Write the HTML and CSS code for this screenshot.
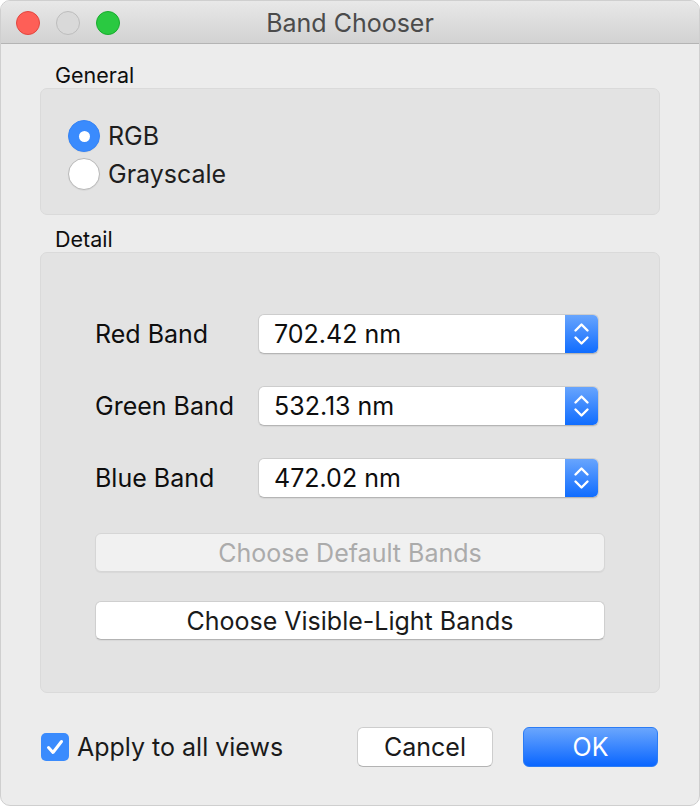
FILE: index.html
```html
<!DOCTYPE html>
<html>
<head>
<meta charset="utf-8">
<title>Band Chooser</title>
<link rel="stylesheet" href="styles.css">
</head>
<body>
<div class="window">
  <div class="titlebar">
    <div class="lights">
      <span class="light red"></span>
      <span class="light gray"></span>
      <span class="light green"></span>
    </div>
    <div class="title">Band Chooser</div>
  </div>
  <div class="content">
    <div class="section-label general-label">General</div>
    <div class="group general-group">
      <label class="radio-row">
        <span class="radio on"></span>
        <span class="radio-text">RGB</span>
      </label>
      <label class="radio-row">
        <span class="radio"></span>
        <span class="radio-text">Grayscale</span>
      </label>
    </div>
    <div class="section-label detail-label">Detail</div>
    <div class="group detail-group">
      <div class="band-row">
        <span class="band-label">Red Band</span>
        <div class="popup">
          <span class="popup-value">702.42 nm</span>
          <span class="stepper">
            <svg width="33" height="38" viewBox="0 0 33 38"><path d="M10.5 15.5 L16.5 9.5 L22.5 15.5" fill="none" stroke="#fff" stroke-width="2.4" stroke-linecap="round" stroke-linejoin="round"/><path d="M10.5 22.5 L16.5 28.5 L22.5 22.5" fill="none" stroke="#fff" stroke-width="2.4" stroke-linecap="round" stroke-linejoin="round"/></svg>
          </span>
        </div>
      </div>
      <div class="band-row">
        <span class="band-label">Green Band</span>
        <div class="popup">
          <span class="popup-value">532.13 nm</span>
          <span class="stepper">
            <svg width="33" height="38" viewBox="0 0 33 38"><path d="M10.5 15.5 L16.5 9.5 L22.5 15.5" fill="none" stroke="#fff" stroke-width="2.4" stroke-linecap="round" stroke-linejoin="round"/><path d="M10.5 22.5 L16.5 28.5 L22.5 22.5" fill="none" stroke="#fff" stroke-width="2.4" stroke-linecap="round" stroke-linejoin="round"/></svg>
          </span>
        </div>
      </div>
      <div class="band-row">
        <span class="band-label">Blue Band</span>
        <div class="popup">
          <span class="popup-value">472.02 nm</span>
          <span class="stepper">
            <svg width="33" height="38" viewBox="0 0 33 38"><path d="M10.5 15.5 L16.5 9.5 L22.5 15.5" fill="none" stroke="#fff" stroke-width="2.4" stroke-linecap="round" stroke-linejoin="round"/><path d="M10.5 22.5 L16.5 28.5 L22.5 22.5" fill="none" stroke="#fff" stroke-width="2.4" stroke-linecap="round" stroke-linejoin="round"/></svg>
          </span>
        </div>
      </div>
      <div class="wide-button disabled">Choose Default Bands</div>
      <div class="wide-button">Choose Visible-Light Bands</div>
    </div>
    <div class="bottom-bar">
      <label class="check-row">
        <span class="checkbox">
          <svg width="28" height="28" viewBox="0 0 28 28"><path d="M7.5 14.5 L12 19.5 L20.5 8.5" fill="none" stroke="#fff" stroke-width="3" stroke-linecap="round" stroke-linejoin="round"/></svg>
        </span>
        <span class="check-text">Apply to all views</span>
      </label>
      <div class="actions">
        <div class="push cancel">Cancel</div>
        <div class="push ok">OK</div>
      </div>
    </div>
  </div>
</div>
</body>
</html>
```

FILE: styles.css
```css
html, body {
  margin: 0;
  padding: 0;
  background: #ffffff;
}

body {
  font-family: Inter, "Noto Sans", sans-serif;
  color: #1a1a1a;
}

.window {
  width: 700px;
  height: 806px;
  background: #ececec;
  border-radius: 10px;
  overflow: hidden;
  box-sizing: border-box;
  border: 1px solid #cfcfcf;
  display: flex;
  flex-direction: column;
}

.titlebar {
  height: 43px;
  flex: none;
  box-sizing: border-box;
  background: linear-gradient(#e8e8e8, #d2d2d2);
  border-bottom: 1px solid #b4b4b4;
  display: flex;
  align-items: center;
  position: relative;
}

.lights {
  display: flex;
  gap: 16px;
  padding-left: 15px;
  padding-top: 1px;
}

.light {
  width: 24px;
  height: 24px;
  border-radius: 50%;
  box-sizing: border-box;
}

.light.red {
  background: #fe5f57;
  border: 1px solid #e2463f;
}

.light.gray {
  background: #d9d9d9;
  border: 1px solid #bdbdbd;
}

.light.green {
  background: #2ac941;
  border: 1px solid #19ac2e;
}

.title {
  position: absolute;
  left: 0;
  right: 0;
  top: 0;
  bottom: 0;
  display: flex;
  align-items: center;
  justify-content: center;
  font-size: 25px;
  color: #4b4b4b;
  padding-top: 1px;
}

.content {
  padding: 0 39px;
  display: flex;
  flex-direction: column;
}

.section-label {
  font-size: 21.5px;
  line-height: 26px;
  padding-left: 15px;
  color: #0e0e0e;
}

.general-label {
  padding-top: 18px;
}

.detail-label {
  padding-top: 11px;
}

.group {
  background: #e3e3e3;
  border: 1px solid #dadada;
  border-radius: 7px;
  box-sizing: border-box;
}

.general-group {
  height: 127px;
  padding: 28px 0 0 27px;
  display: flex;
  flex-direction: column;
}

.radio-row {
  height: 38px;
  display: flex;
  align-items: center;
  gap: 8px;
}

.radio {
  width: 32px;
  height: 32px;
  border-radius: 50%;
  box-sizing: border-box;
  background: #fff;
  border: 1px solid #b9b9b9;
  box-shadow: 0 0.5px 1px rgba(0,0,0,0.08);
  display: flex;
  align-items: center;
  justify-content: center;
}

.radio.on {
  background: #3a8bfd;
  border-color: #3583f5;
}

.radio.on::after {
  content: "";
  width: 11px;
  height: 11px;
  border-radius: 50%;
  background: #fff;
}

.radio-text {
  font-size: 25px;
  color: #1e1e1e;
}

.detail-group {
  height: 441px;
  padding: 61px 60px 0 54px;
  display: flex;
  flex-direction: column;
}

.band-row {
  height: 40px;
  display: flex;
  align-items: center;
  margin-bottom: 32px;
}

.band-label {
  width: 163px;
  flex: none;
  font-size: 25px;
  color: #0e0e0e;
}

.popup {
  flex: 1;
  height: 40px;
  box-sizing: border-box;
  background: #fff;
  border: 1px solid #cdcdcd;
  border-bottom-color: #b5b5b5;
  border-radius: 6px;
  box-shadow: 0 1px 1px rgba(0,0,0,0.06);
  display: flex;
  align-items: center;
  overflow: hidden;
}

.popup-value {
  flex: 1;
  font-size: 25px;
  padding-left: 15px;
  color: #0e0e0e;
}

.stepper {
  width: 33px;
  height: 40px;
  flex: none;
  background: linear-gradient(#6aa6fd, #0d6bff);
  display: flex;
  align-items: center;
  justify-content: center;
}

.wide-button {
  height: 39px;
  margin-right: -6px;
  box-sizing: border-box;
  border-radius: 6px;
  background: #fff;
  border: 1px solid #cfcfcf;
  border-bottom-color: #b3b3b3;
  box-shadow: 0 1px 1px rgba(0,0,0,0.05);
  display: flex;
  align-items: center;
  justify-content: center;
  font-size: 25px;
  color: #1a1a1a;
}

.wide-button.disabled {
  margin-top: 3px;
  margin-bottom: 29px;
  background: #f1f1f1;
  border-color: #d6d6d6;
  color: #ababab;
}

.bottom-bar {
  margin-top: 34px;
  height: 40px;
  display: flex;
  align-items: center;
  justify-content: space-between;
  padding-right: 2px;
}

.check-row {
  display: flex;
  align-items: center;
  gap: 8px;
  padding-left: 1px;
}

.checkbox {
  width: 28px;
  height: 28px;
  border-radius: 5px;
  background: #3a8bfd;
  display: flex;
  align-items: center;
  justify-content: center;
}

.check-text {
  font-size: 25px;
  color: #1a1a1a;
}

.actions {
  display: flex;
  gap: 30px;
}

.push {
  width: 136px;
  height: 40px;
  box-sizing: border-box;
  border-radius: 6px;
  display: flex;
  align-items: center;
  justify-content: center;
  font-size: 25px;
}

.push.cancel {
  background: #fff;
  border: 1px solid #cdcdcd;
  border-bottom-color: #b3b3b3;
  color: #1a1a1a;
}

.push.ok {
  background: linear-gradient(#6aa6fd, #0a66ff);
  border: 1px solid #2b7cf5;
  color: #fff;
  width: 135px;
}
```
